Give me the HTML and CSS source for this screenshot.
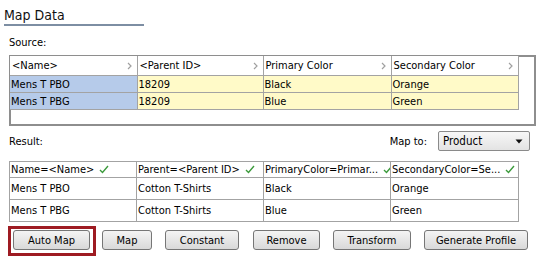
FILE: index.html
```html
<!DOCTYPE html>
<html>
<head>
<meta charset="utf-8">
<link rel="stylesheet" href="styles.css">
</head>
<body>
<div class="page">
  <div class="title">Map Data</div>
  <div class="label source-label">Source:</div>
  <div class="source-box">
    <table class="grid src">
      <colgroup><col class="c1"><col class="c2"><col class="c3"><col class="c4"></colgroup>
      <tr class="head">
        <th><div class="hcell"><span>&lt;Name&gt;</span><svg class="chev" width="5" height="8" viewBox="0 0 5 8"><path d="M1 1 L4 4 L1 7" fill="none" stroke="#a0a0a0" stroke-width="1.2"/></svg></div></th>
        <th><div class="hcell"><span>&lt;Parent ID&gt;</span><svg class="chev" width="5" height="8" viewBox="0 0 5 8"><path d="M1 1 L4 4 L1 7" fill="none" stroke="#a0a0a0" stroke-width="1.2"/></svg></div></th>
        <th><div class="hcell"><span>Primary Color</span><svg class="chev" width="5" height="8" viewBox="0 0 5 8"><path d="M1 1 L4 4 L1 7" fill="none" stroke="#a0a0a0" stroke-width="1.2"/></svg></div></th>
        <th><div class="hcell"><span>Secondary Color</span><svg class="chev" width="5" height="8" viewBox="0 0 5 8"><path d="M1 1 L4 4 L1 7" fill="none" stroke="#a0a0a0" stroke-width="1.2"/></svg></div></th>
      </tr>
      <tr><td class="key">Mens T PBO</td><td>18209</td><td>Black</td><td>Orange</td></tr>
      <tr><td class="key">Mens T PBG</td><td>18209</td><td>Blue</td><td>Green</td></tr>
    </table>
  </div>
  <div class="result-bar">
    <div class="label">Result:</div>
    <div class="mapto">
      <span class="mapto-label">Map to:</span>
      <div class="select"><span>Product</span><svg width="8" height="5" viewBox="0 0 8 5"><path d="M0.5 0.5 L7.5 0.5 L4 4.5 Z" fill="#111"/></svg></div>
    </div>
  </div>
  <table class="grid res">
    <colgroup><col class="r1"><col class="r2"><col class="r3"><col class="r4"></colgroup>
    <tr class="head">
      <th><div class="hcell"><span>Name=&lt;Name&gt;</span><svg class="check" width="10" height="9" viewBox="0 0 10 9"><path d="M1 5 L3.5 7.5 L9 1" fill="none" stroke="#3b9a3b" stroke-width="1.4"/></svg></div></th>
      <th><div class="hcell"><span>Parent=&lt;Parent ID&gt;</span><svg class="check" width="10" height="9" viewBox="0 0 10 9"><path d="M1 5 L3.5 7.5 L9 1" fill="none" stroke="#3b9a3b" stroke-width="1.4"/></svg></div></th>
      <th><div class="hcell"><span>PrimaryColor=Primar...</span><svg class="check" width="10" height="9" viewBox="0 0 10 9"><path d="M1 5 L3.5 7.5 L9 1" fill="none" stroke="#3b9a3b" stroke-width="1.4"/></svg></div></th>
      <th><div class="hcell"><span>SecondaryColor=Se...</span><svg class="check" width="10" height="9" viewBox="0 0 10 9"><path d="M1 5 L3.5 7.5 L9 1" fill="none" stroke="#3b9a3b" stroke-width="1.4"/></svg></div></th>
    </tr>
    <tr><td>Mens T PBO</td><td>Cotton T-Shirts</td><td>Black</td><td>Orange</td></tr>
    <tr><td>Mens T PBG</td><td>Cotton T-Shirts</td><td>Blue</td><td>Green</td></tr>
  </table>
  <div class="buttons">
    <button class="btn btn-auto highlighted">Auto Map</button>
    <button class="btn btn-map">Map</button>
    <button class="btn btn-constant">Constant</button>
    <button class="btn btn-remove">Remove</button>
    <button class="btn btn-transform">Transform</button>
    <button class="btn btn-generate">Generate Profile</button>
  </div>
</div>
</body>
</html>
```

FILE: styles.css
```css
html, body {
  margin: 0;
  padding: 0;
  background: #ffffff;
}
body {
  font-family: "DejaVu Sans Condensed", "Liberation Sans", sans-serif;
  font-size: 11px;
  color: #000;
}
.page {
  width: 539px;
  height: 260px;
  display: flex;
  flex-direction: column;
  overflow: hidden;
}
.title {
  margin-top: 7px;
  margin-left: 4px;
  width: 140px;
  font-size: 14px;
  line-height: 17px;
  color: #111;
  border-bottom: 2px solid #7d8ea3;
}
.label {
  line-height: 13px;
  margin-left: 9px;
}
.source-label {
  margin-top: 10px;
}
.source-box {
  margin-top: 6px;
  margin-left: 9px;
  width: 527px;
  height: 71px;
  box-sizing: border-box;
  border: 2px solid #8e8e8e;
  background: #fff;
}
.grid {
  border-collapse: collapse;
  table-layout: fixed;
}
.grid th, .grid td {
  border: 1px solid #a3a3a3;
  padding: 0 0 0 1px;
  text-align: left;
  font-weight: normal;
  white-space: nowrap;
  overflow: hidden;
  line-height: 13px;
}
.src {
  width: 508px;
  margin-top: -1px;
  margin-left: -1px;
}
.src .c1 { width: 127px; }
.src .c2 { width: 126px; }
.src .c3 { width: 128px; }
.src .c4 { width: 127px; }
.src th {
  height: 19px;
  background: #fff;
  border-top: none;
  border-left: none;
}
.src td {
  height: 16px;
  background: #fffac8;
}
.src td.key {
  background: #b6cbea;
  border-left: none;
}
.hcell {
  display: flex;
  align-items: center;
  justify-content: space-between;
}
.src .hcell {
  padding-left: 1px;
  padding-right: 5px;
}
.chev {
  flex: none;
}
.result-bar {
  margin-top: 5px;
  height: 20px;
  display: flex;
  align-items: center;
  justify-content: space-between;
}
.mapto {
  display: flex;
  align-items: center;
  margin-right: 9px;
}
.mapto-label {
  margin-right: 11px;
}
.select {
  width: 92px;
  height: 20px;
  box-sizing: border-box;
  border: 1px solid #8a8a8a;
  border-radius: 2px;
  background: linear-gradient(#f7f7f7, #e3e3e3);
  display: flex;
  align-items: center;
  justify-content: space-between;
  padding: 0 6px 0 4px;
  font-size: 11.5px;
}
.res {
  margin-top: 10px;
  margin-left: 9px;
  width: 509px;
  border: 1px solid #9a9a9a;
}
.res .r1 { width: 127px; }
.res .r2 { width: 127px; }
.res .r3 { width: 127px; }
.res .r4 { width: 128px; }
.res th {
  height: 15px;
  background: #fff;
}
.res td {
  height: 21px;
  background: #fff;
}
.res .hcell {
  justify-content: flex-start;
  gap: 5px;
}
.check {
  flex: none;
}
.buttons {
  margin-top: 8px;
  display: flex;
  gap: 13px;
  padding-left: 13px;
}
.btn {
  position: relative;
  height: 20px;
  box-sizing: border-box;
  border: 1px solid #767676;
  border-radius: 3px;
  background: linear-gradient(#f4f4f4, #e6e6e6 50%, #d9d9d9);
  font-family: "DejaVu Sans Condensed", "Liberation Sans", sans-serif;
  font-size: 11px;
  color: #000;
  padding: 0;
  text-align: center;
}
.btn-auto { width: 77px; }
.btn-map { width: 50px; margin-left: -1px; }
.btn-constant { width: 74px; }
.btn-remove { width: 67px; margin-left: 1px; }
.btn-transform { width: 78px; }
.btn-generate { width: 104px; }
.highlighted::after {
  content: "";
  position: absolute;
  top: -5px;
  left: -6px;
  right: -7px;
  bottom: -7px;
  border: 3px solid #9e1b22;
  pointer-events: none;
}
```
